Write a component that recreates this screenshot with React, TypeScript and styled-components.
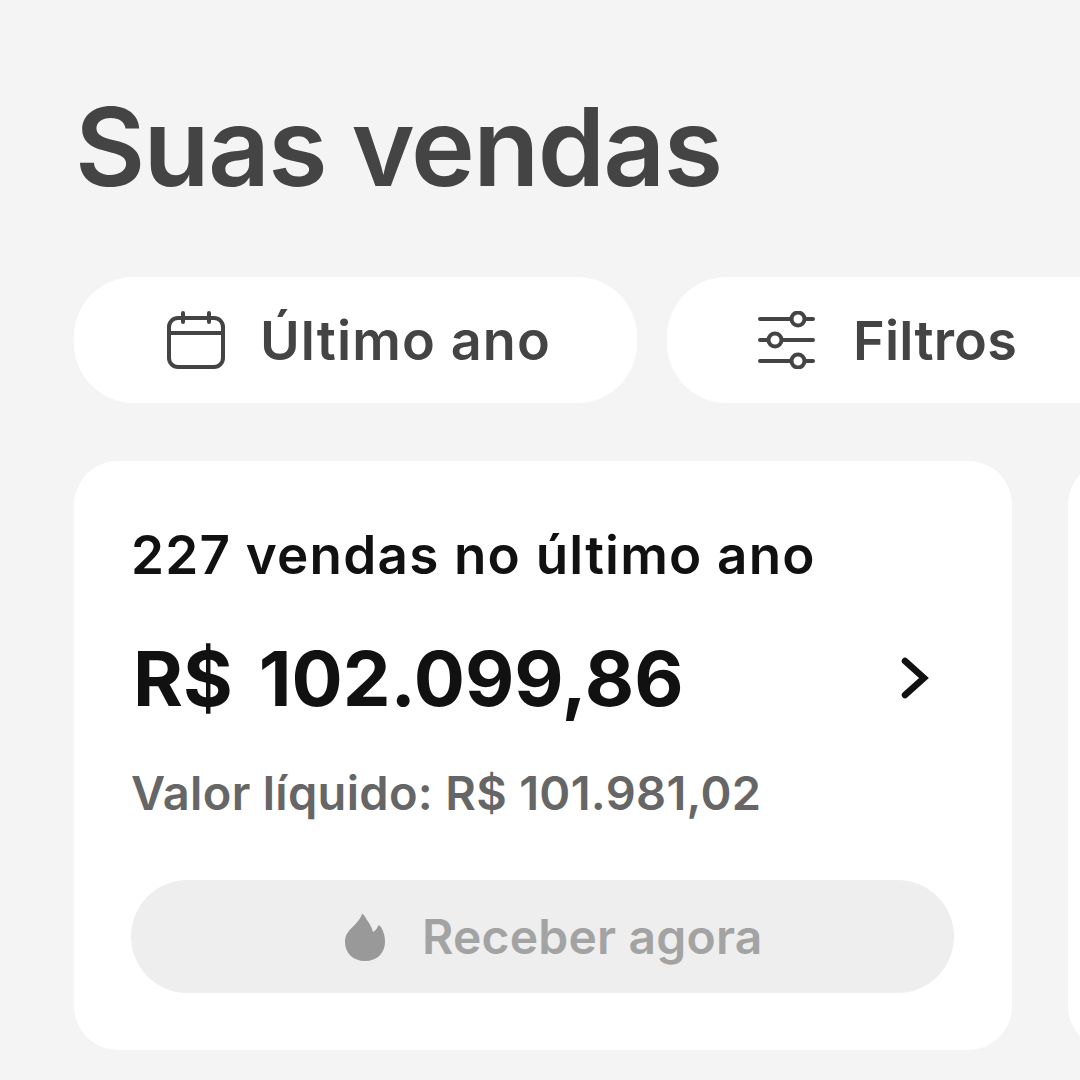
import React from "react";
import styled, { createGlobalStyle } from "styled-components";

const GlobalStyle = createGlobalStyle`
  html, body {
    margin: 0;
    padding: 0;
    background: #f4f4f4;
    overflow: hidden;
  }
`;

const Page = styled.div`
  width: 1080px;
  height: 1080px;
  overflow: hidden;
  box-sizing: border-box;
  padding: 81px 0 0 74px;
  font-family: Inter, "Liberation Sans", sans-serif;
  background: #f4f4f4;
`;

const Title = styled.h1`
  margin: 0 0 0 1px;
  height: 135px;
  font-size: 108px;
  line-height: 132px;
  font-weight: 600;
  letter-spacing: -1.7px;
  color: #444444;
  white-space: nowrap;
`;

const FilterRow = styled.div`
  display: flex;
  gap: 30px;
  margin-top: 61px;
`;

const Pill = styled.div<{ $width: number; $gap: number; $pad: number }>`
  flex: none;
  display: flex;
  align-items: center;
  box-sizing: border-box;
  width: ${(p) => p.$width}px;
  height: 126px;
  padding-left: ${(p) => p.$pad}px;
  gap: ${(p) => p.$gap}px;
  background: #ffffff;
  border-radius: 60px;
`;

const PillLabel = styled.span<{ $spacing: number }>`
  font-size: 54px;
  font-weight: 600;
  letter-spacing: ${(p) => p.$spacing}px;
  color: #444444;
  white-space: nowrap;
`;

const Cards = styled.div`
  display: flex;
  gap: 56px;
  margin-top: 58px;
`;

const Card = styled.section`
  flex: none;
  box-sizing: border-box;
  width: 938px;
  height: 589px;
  padding: 64px 57px 0;
  background: #ffffff;
  border-radius: 44px;
`;

const Subtitle = styled.div`
  font-size: 53px;
  line-height: 60px;
  font-weight: 600;
  letter-spacing: 1.2px;
  color: #111111;
  white-space: nowrap;
`;

const AmountRow = styled.div`
  display: flex;
  align-items: center;
  justify-content: space-between;
  margin-top: 48px;
  padding-left: 2px;
  padding-right: 26px;
`;

const Amount = styled.div`
  font-size: 76px;
  line-height: 90px;
  font-weight: 700;
  word-spacing: 8px;
  color: #111111;
  white-space: nowrap;
`;

const NetValue = styled.div`
  margin-top: 42px;
  font-size: 47px;
  line-height: 56px;
  font-weight: 600;
  letter-spacing: 0.3px;
  color: #666666;
  white-space: nowrap;
`;

const ReceiveButton = styled.div`
  display: flex;
  align-items: center;
  box-sizing: border-box;
  width: 823px;
  height: 113px;
  margin-top: 59px;
  padding-left: 214px;
  gap: 37px;
  background: #eeeeee;
  border-radius: 57px;
`;

const ButtonLabel = styled.span`
  font-size: 48px;
  font-weight: 600;
  letter-spacing: 0.2px;
  color: #a3a3a3;
  white-space: nowrap;
`;

const CalendarIcon = () => (
  <svg width="58" height="58" viewBox="0 0 58 58" fill="none" stroke="#444444" strokeWidth="4" strokeLinecap="round">
    <rect x="2" y="7" width="54" height="49" rx="9" />
    <path d="M2 22h54" />
    <path d="M16 2v9M42 2v9" />
  </svg>
);

const SlidersIcon = () => (
  <svg width="58" height="58" viewBox="0 0 58 58" fill="none" stroke="#444444" strokeWidth="4" strokeLinecap="round">
    <path d="M2 8h31M47 8h8M2 29h8M24 29h31M2 50h31M47 50h8" />
    <circle cx="40" cy="8" r="6.5" />
    <circle cx="17" cy="29" r="6.5" />
    <circle cx="40" cy="50" r="6.5" />
  </svg>
);

const ChevronIcon = () => (
  <svg width="28" height="42" viewBox="0 0 28 42" fill="none" stroke="#111111" strokeWidth="6.5" strokeLinecap="round" strokeLinejoin="miter">
    <path d="M4 4l19 17L4 38" />
  </svg>
);

const FlameIcon = () => (
  <svg width="40" height="48" viewBox="0 0 40 48" fill="#999999">
    <path d="M17 1c2 0 3 3 5 6 3 4 5 8 6 12 2-1 4-3 5-6 1-1 2 0 3 1 3 5 4 10 4 15 0 11-8 19-20 19S0 40 0 29C0 16 13 13 17 1z" />
  </svg>
);

export default function App() {
  return (
    <Page>
      <GlobalStyle />
      <Title>Suas vendas</Title>
      <FilterRow>
        <Pill $width={563} $gap={35} $pad={93}>
          <CalendarIcon />
          <PillLabel $spacing={1.1}>Último ano</PillLabel>
        </Pill>
        <Pill $width={500} $gap={37} $pad={91}>
          <SlidersIcon />
          <PillLabel $spacing={0.2}>Filtros</PillLabel>
        </Pill>
      </FilterRow>
      <Cards>
        <Card>
          <Subtitle>227 vendas no último ano</Subtitle>
          <AmountRow>
            <Amount>R$ 102.099,86</Amount>
            <ChevronIcon />
          </AmountRow>
          <NetValue>Valor líquido: R$ 101.981,02</NetValue>
          <ReceiveButton>
            <FlameIcon />
            <ButtonLabel>Receber agora</ButtonLabel>
          </ReceiveButton>
        </Card>
        <Card />
      </Cards>
    </Page>
  );
}
